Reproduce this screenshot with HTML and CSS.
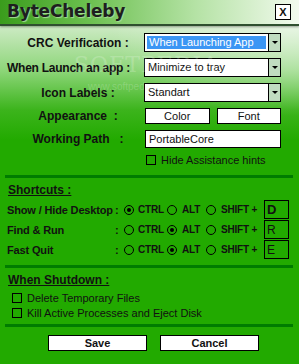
FILE: index.html
```html
<!DOCTYPE html>
<html lang="en">
<head>
  <meta charset="UTF-8" />
  <title>ByteCheleby</title>
  <link rel="stylesheet" href="styles.css">
</head>
<body>
  <div class="titlebar">
    <span class="title">ByteCheleby</span>
    <span class="close">X</span>
  </div>

  <div class="settings">
    <div class="field-label">CRC Verification :</div>
    <div class="select selected"><span class="value">When Launching App</span><span class="arrow"></span></div>

    <div class="field-label wide">When Launch an app :</div>
    <div class="select"><span class="value">Minimize to tray</span><span class="arrow"></span></div>

    <div class="field-label">Icon Labels :</div>
    <div class="select"><span class="value">Standart</span><span class="arrow"></span></div>

    <div class="field-label">Appearance&nbsp; :</div>
    <div class="pair">
      <button class="btn">Color</button>
      <button class="btn">Font</button>
    </div>

    <div class="field-label">Working Path&nbsp;&nbsp; :</div>
    <div class="input">PortableCore</div>

    <div></div>
    <label class="check"><span class="box"></span>Hide Assistance hints</label>
  </div>

  <div class="rule"></div>

  <h2 class="section">Shortcuts :</h2>
  <div class="shortcuts">
    <div class="shortcut">
      <span class="sc-label">Show / Hide Desktop</span><span class="colon">:</span>
      <span class="radio on"></span><span class="opt">CTRL</span>
      <span class="radio"></span><span class="opt">ALT</span>
      <span class="radio"></span><span class="opt">SHIFT +</span>
      <span class="key big">D</span>
    </div>
    <div class="shortcut">
      <span class="sc-label">Find &amp; Run</span><span class="colon">:</span>
      <span class="radio"></span><span class="opt">CTRL</span>
      <span class="radio on"></span><span class="opt">ALT</span>
      <span class="radio"></span><span class="opt">SHIFT +</span>
      <span class="key">R</span>
    </div>
    <div class="shortcut">
      <span class="sc-label">Fast Quit</span><span class="colon">:</span>
      <span class="radio"></span><span class="opt">CTRL</span>
      <span class="radio on"></span><span class="opt">ALT</span>
      <span class="radio"></span><span class="opt">SHIFT +</span>
      <span class="key">E</span>
    </div>
  </div>

  <div class="rule tight"></div>

  <h2 class="section">When Shutdown :</h2>
  <div class="shutdown">
    <label class="check"><span class="box"></span>Delete Temporary Files</label>
    <label class="check"><span class="box"></span>Kill Active Processes and Eject Disk</label>
  </div>

  <div class="rule tight"></div>

  <div class="actions">
    <button class="btn action">Save</button>
    <button class="btn action">Cancel</button>
  </div>

  <div class="watermark">SOFTPEDIA<span>www.softpedia.com</span></div>
</body>
</html>
```

FILE: styles.css
```css
* {
  margin: 0;
  padding: 0;
  box-sizing: border-box;
}

body {
  width: 299px;
  height: 364px;
  overflow: hidden;
  position: relative;
  font-family: "Liberation Sans", Arial, sans-serif;
  font-size: 11px;
  color: #111;
  background:
    radial-gradient(ellipse 180px 90px at 290px 26px, rgba(255, 255, 255, 0.55), rgba(255, 255, 255, 0)),
    linear-gradient(to bottom, #cdeac4 26px, #8ed67a 70px, #3cb41c 110px, #22aa00 140px, #22aa00);
}

.titlebar {
  height: 26px;
  display: flex;
  align-items: center;
  justify-content: space-between;
  padding: 0 8px 2px 7px;
  background: linear-gradient(to right, #3a9c1c, #6cc050 30%, #b4e2a4 65%, #f2faee);
  border-bottom: 2px solid #2f4f2f;
  box-shadow: 0 1px 2px rgba(0, 0, 0, 0.35);
}

.title {
  font-family: "DejaVu Sans", sans-serif;
  font-weight: bold;
  font-size: 17px;
  color: #1e1e1e;
  letter-spacing: -0.2px;
  text-shadow: 1px 1px 1px #a6dc96;
}

.close {
  width: 16px;
  height: 16px;
  border: 1px solid #000;
  background: #fff;
  font-weight: bold;
  font-size: 11px;
  display: flex;
  align-items: center;
  justify-content: center;
  margin-top: 2px;
}

.settings {
  display: grid;
  grid-template-columns: 144px 137px;
  grid-template-rows: 19px 19px 19px 16px 18px 12px;
  row-gap: 6px;
  margin-top: 7px;
}

.field-label {
  font-weight: bold;
  font-size: 12px;
  text-align: center;
  align-self: center;
  padding-left: 12px;
  white-space: nowrap;
}

.field-label.wide {
  padding-left: 0;
  text-align: right;
  padding-right: 14px;
  letter-spacing: -0.25px;
}

.select {
  display: flex;
  height: 19px;
}

.select .value {
  flex: 1;
  border: 1px solid #000;
  background: #fff;
  padding: 0 3px;
  line-height: 17px;
  white-space: nowrap;
}

.select.selected .value {
  background: #3b96f4;
  color: #fff;
  box-shadow: inset 0 0 0 2px #fff;
  padding-left: 4px;
}

.select .arrow {
  width: 12px;
  border: 1px solid #000;
  border-left: 0;
  background: #c0dcc0;
  position: relative;
}

.select .arrow::after {
  content: "";
  position: absolute;
  left: 3px;
  top: 7px;
  border-left: 3px solid transparent;
  border-right: 3px solid transparent;
  border-top: 3px solid #000;
}

.pair {
  display: flex;
  gap: 7px;
  padding-left: 1px;
}

.btn {
  flex: 1;
  border: 1px solid #000;
  background: #fff;
  font-family: "Liberation Sans", Arial, sans-serif;
  font-size: 11px;
  color: #111;
}

.input {
  border: 1px solid #000;
  background: #fff;
  padding: 0 3px;
  line-height: 16px;
  margin-left: 1px;
}

.check {
  display: flex;
  align-items: center;
  gap: 5px;
  white-space: nowrap;
  padding-left: 2px;
}

.check .box {
  width: 10px;
  height: 10px;
  border: 1px solid #000;
}

.rule {
  height: 3px;
  background: #007c00;
  margin: 9px 6px 0 5px;
}

.rule.tight {
  margin-top: 6px;
}

.section {
  font-size: 12px;
  font-weight: bold;
  text-decoration: underline;
  padding-left: 8px;
  margin-top: 5px;
  line-height: 15px;
}

.shortcuts {
  display: flex;
  flex-direction: column;
  gap: 1px;
  margin-top: 2px;
}

.shortcut {
  display: grid;
  grid-template-columns: 108px 9px 14px 29px 15px 24px 15px 43px 25px;
  align-items: center;
  height: 19px;
  padding-left: 7px;
  font-weight: bold;
}

.sc-label {
  white-space: nowrap;
  letter-spacing: -0.15px;
}

.radio {
  width: 10px;
  height: 10px;
  border: 1px solid #000;
  border-radius: 50%;
  position: relative;
}

.radio.on::after {
  content: "";
  position: absolute;
  left: 2px;
  top: 2px;
  width: 4px;
  height: 4px;
  border-radius: 50%;
  background: #000;
}

.opt {
  font-size: 10px;
  letter-spacing: -0.2px;
  white-space: nowrap;
}

.key {
  height: 19px;
  border: 1px solid #000;
  font-weight: normal;
  font-size: 12px;
  padding-left: 2px;
  line-height: 18px;
}

.key.big {
  font-weight: bold;
  font-size: 13px;
}

.shutdown {
  display: flex;
  flex-direction: column;
  gap: 4px;
  margin-top: 4px;
  padding-left: 10px;
}

.shutdown .check {
  height: 11px;
}

.actions {
  display: flex;
  gap: 13px;
  padding-left: 48px;
  margin-top: 8px;
}

.btn.action {
  flex: none;
  width: 99px;
  height: 16px;
  font-weight: bold;
}

.watermark {
  position: absolute;
  left: 74px;
  top: 52px;
  font-family: "DejaVu Serif", serif;
  font-size: 22px;
  letter-spacing: 1px;
  color: rgba(255, 255, 255, 0.2);
  pointer-events: none;
}

.watermark span {
  display: block;
  font-family: "Liberation Sans", Arial, sans-serif;
  font-size: 10px;
  letter-spacing: 0;
  padding-left: 14px;
  margin-top: 4px;
}
```
